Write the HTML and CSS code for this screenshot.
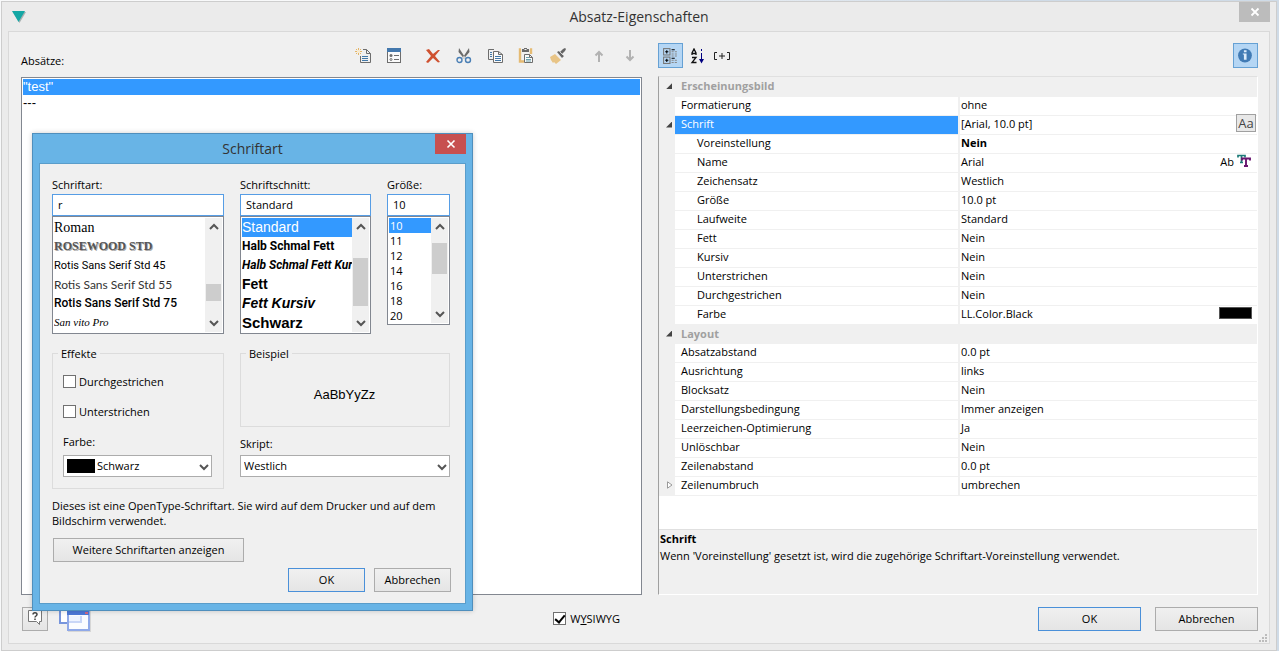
FILE: index.html
```html
<!DOCTYPE html>
<html lang="de">
<head>
<meta charset="utf-8">
<title>Absatz-Eigenschaften</title>
<link rel="stylesheet" href="styles.css">
</head>
<body>
<main class="window">
  <header class="titlebar">
    <svg class="app-icon" viewBox="0 0 16 16"><path d="M2 3h13L8.500 14z" fill="#7b8a8a" opacity=".6"/><path d="M1 2h13L7.500 13z" fill="#14a7a5"/></svg>
    <h1 class="title">Absatz-Eigenschaften</h1>
    <button class="close" type="button" aria-label="Schließen"><svg viewBox="0 0 10 10"><path d="M1.500 1.500l7 7M8.500 1.500l-7 7" stroke="#fff" stroke-width="1.800"/></svg></button>
  </header>

  <div class="panel">
    <section class="column">
      <div class="bar">
        <span class="bar-label" id="paragraphs">Absätze:</span>
        <div class="tools">
          <button type="button" class="tool" aria-label="Neu"><svg viewBox="0 0 16 16"><path d="M8 1.500h3.500l4 4v9h-10V8M11.500 1.500v4h4" fill="none" stroke="#6d6d6d"/><path d="M7 8.500h6M7 10.500h6M7 12.500h6" stroke="#4178a8"/><path d="M3.500 0v7M0 3.500h7M1 1l5 5M6 1L1 6" stroke="#e5b566"/><rect x="2" y="2" width="3" height="3" fill="#f7ead0"/></svg></button>
          <button type="button" class="tool" aria-label="Eigenschaften"><svg viewBox="0 0 16 16"><rect x="1.500" y="1.500" width="13" height="13" fill="#fafafa" stroke="#6d6d6d"/><path d="M1 0h14v4H1z" fill="#4478ad"/><circle cx="5" cy="7.500" r="1.500" fill="#6d6d6d"/><circle cx="5" cy="11.500" r="1" fill="none" stroke="#6d6d6d"/><path d="M8 7.500h5M8 11.500h5" stroke="#6d6d6d"/></svg></button>
          <span class="sep"></span>
          <button type="button" class="tool" aria-label="Löschen"><svg viewBox="0 0 16 16"><path d="M1 2l3-1 4 5 5-4h2L10 8l5 6-2 .5-5-4.500-5 5-2-1 5-6z" fill="#cf5130"/></svg></button>
          <button type="button" class="tool" aria-label="Ausschneiden"><svg viewBox="0 0 16 16"><path d="M3 0l6.500 10-1.500.5L2.500 4zM13 0L6.500 10l1.500.5L13.500 4z" fill="#6b6b6b"/><circle cx="3.500" cy="12" r="2.500" fill="none" stroke="#4a7fb5" stroke-width="1.400"/><circle cx="12" cy="12" r="2.500" fill="none" stroke="#4a7fb5" stroke-width="1.400"/></svg></button>
          <button type="button" class="tool" aria-label="Kopieren"><svg viewBox="0 0 16 16"><path d="M6 11.500H1.500v-10H7" fill="none" stroke="#6d6d6d"/><path d="M3 4.500h2M3 6.500h2M3 8.500h2" stroke="#4178a8"/><path d="M6.500 3.500h5l4 3v8h-9zM11.500 3.500v3h4" fill="#fafafa" stroke="#6d6d6d"/><path d="M8 8.500h6M8 10.500h6M8 12.500h6" stroke="#4178a8"/></svg></button>
          <button type="button" class="tool" aria-label="Einfügen"><svg viewBox="0 0 16 16"><path d="M3 1.500H2v12h4M12 1.500h1V6" fill="none" stroke="#e5bb73" stroke-width="2.400"/><path d="M4 1h2V0h3v1h2v3H4z" fill="#6b6b6b"/><rect x="6.500" y="1" width="2" height="1" fill="#f0f0f0"/><path d="M6.500 6.500h5l3 3v5h-8zM11.500 6.500v3h3" fill="#fafafa" stroke="#6d6d6d"/><path d="M8 9.500h3M8 11.500h5M8 13h5" stroke="#68a0ac"/></svg></button>
          <button type="button" class="tool wide" aria-label="Format übertragen"><svg viewBox="0 0 18 16"><path d="M1 9l5-3 6 6-5 4-2-2-1 1-2-3z" fill="#e8c486"/><path d="M8 4l2-1 5 5-2 2z" fill="#666"/><path d="M11 4l3-3 2-1 1 1-1 2-3 3z" fill="#666"/><path d="M10.500 3.500l4 4" stroke="#f0f0f0" stroke-width=".7"/></svg></button>
          <span class="sep"></span>
          <button type="button" class="tool" aria-label="Nach oben" disabled><svg viewBox="0 0 16 16"><path d="M9 14V4M5.500 7.500L9 4l3.500 3.500" fill="none" stroke="#b2b2b2" stroke-width="2"/></svg></button>
          <button type="button" class="tool" aria-label="Nach unten" disabled><svg viewBox="0 0 16 16"><path d="M9 2v10M5.500 8.500L9 12l3.500-3.500" fill="none" stroke="#b2b2b2" stroke-width="2"/></svg></button>
        </div>
      </div>
      <ul class="paragraphs" role="listbox" aria-labelledby="paragraphs">
        <li class="paragraph selected" role="option" aria-selected="true">"test"</li>
        <li class="paragraph" role="option">---</li>
      </ul>
      <div class="footer">
        <button type="button" class="button help" aria-label="Hilfe"><svg viewBox="0 0 16 18"><path d="M1.500 1.500h13v11h-2v3l-3-3h-8z" fill="#fff" stroke="#777"/><path d="M6 5.500c0-2.500 4-2.500 4 0 0 1.500-2 1.500-2 3M8 9.500V11" fill="none" stroke="#444" stroke-width="1.500"/></svg></button>
        <svg class="windows-icon" viewBox="0 0 34 26"><rect x="2" y="1" width="22" height="15" fill="#fff" stroke="#7795dc" stroke-width="2"/><rect x="10" y="4" width="23" height="21" fill="#bbb" opacity=".5"/><rect x="10" y="4" width="21" height="19" fill="#fbfcff" stroke="#90a9e8" stroke-width="2"/><rect x="9" y="4" width="22" height="4" fill="#4d78d8"/><rect x="27" y="5" width="3" height="2" fill="#d26a86"/><path d="M11 9h13v7H11z" fill="#c9d6f7"/><path d="M11 9h11v5H11z" fill="#eef3ff"/></svg>
        <label class="check wysiwyg"><input type="checkbox" class="box" checked><span>W<u>Y</u>SIWYG</span></label>
      </div>
    </section>

    <section class="column">
      <div class="bar right-bar">
        <button type="button" class="toggle" aria-label="Kategorisiert"><svg viewBox="0 0 16 16"><g fill="none" stroke="#777"><rect x="1.500" y="1.500" width="6" height="6"/><rect x="1.500" y="9.500" width="6" height="6"/></g><path d="M3 4.500h3M4.500 3v3M3 12.500h3M4.500 11v3M9 2.500h3M9 10.500h3" stroke="#000"/><path d="M9 4.500h6M9 6.500h6M9 8.500h6M9 12.500h6M9 14.500h6" stroke="#888" stroke-dasharray="2 1"/></svg></button>
        <button type="button" class="tool" aria-label="Alphabetisch"><svg viewBox="0 0 16 16"><path d="M2 7V5l2-4 2 4v2M2 5.500h4M2 9.500h4l-4 5h4.500" fill="none" stroke="#111" stroke-width="1.300"/><path d="M11.500 1v3" stroke="#000080" stroke-dasharray="2 1"/><path d="M11.500 5v7" stroke="#000080"/><path d="M9 11h5l-2.500 4.500z" fill="#000080"/></svg></button>
        <button type="button" class="tool expand" aria-label="Alle erweitern"><svg viewBox="0 0 18 16"><path d="M4 4.500H1.500v7H4M14 4.500h2.500v7H14M6 8h6M9 5v6" fill="none" stroke="#222"/></svg></button>
        <button type="button" class="toggle info" aria-label="Info"><svg viewBox="0 0 16 16"><circle cx="7.500" cy="8" r="6.500" fill="#417bb5"/><path d="M6.500 3h2.500v2H6.500zM5.500 6H9v6H6.500V7h-1z" fill="#dcecfb"/></svg></button>
      </div>
      <div class="grid">
        <table class="props">
          <colgroup><col class="c-gutter"><col class="c-name"><col></colgroup>
          <tbody>
            <tr class="category"><td class="gutter"><i class="open"></i></td><th colspan="2">Erscheinungsbild</th></tr>
            <tr><td class="gutter"></td><td class="name">Formatierung</td><td class="value">ohne</td></tr>
            <tr class="active"><td class="gutter"><i class="open"></i></td><td class="name">Schrift</td><td class="value"><div class="cell"><span>[Arial, 10.0 pt]</span><button type="button" class="font-button">Aa</button></div></td></tr>
            <tr class="child"><td class="gutter"></td><td class="name">Voreinstellung</td><td class="value strong">Nein</td></tr>
            <tr class="child"><td class="gutter"></td><td class="name">Name</td><td class="value"><div class="cell"><span>Arial</span><span class="ab">Ab</span><svg class="tt" viewBox="0 0 14 14"><path d="M1 3.500V1.500h7v2M4.500 2v7M3 8.500h3" fill="none" stroke="#1d7b78" stroke-width="1.700"/><path d="M5 6.500V4.500h8v2M9 5v7M7 12h4" fill="none" stroke="#6a1670" stroke-width="1.900"/></svg></div></td></tr>
            <tr class="child"><td class="gutter"></td><td class="name">Zeichensatz</td><td class="value">Westlich</td></tr>
            <tr class="child"><td class="gutter"></td><td class="name">Größe</td><td class="value">10.0 pt</td></tr>
            <tr class="child"><td class="gutter"></td><td class="name">Laufweite</td><td class="value">Standard</td></tr>
            <tr class="child"><td class="gutter"></td><td class="name">Fett</td><td class="value">Nein</td></tr>
            <tr class="child"><td class="gutter"></td><td class="name">Kursiv</td><td class="value">Nein</td></tr>
            <tr class="child"><td class="gutter"></td><td class="name">Unterstrichen</td><td class="value">Nein</td></tr>
            <tr class="child"><td class="gutter"></td><td class="name">Durchgestrichen</td><td class="value">Nein</td></tr>
            <tr class="child"><td class="gutter"></td><td class="name">Farbe</td><td class="value"><div class="cell"><span>LL.Color.Black</span><span class="color"></span></div></td></tr>
            <tr class="category"><td class="gutter"><i class="open"></i></td><th colspan="2">Layout</th></tr>
            <tr><td class="gutter"></td><td class="name">Absatzabstand</td><td class="value">0.0 pt</td></tr>
            <tr><td class="gutter"></td><td class="name">Ausrichtung</td><td class="value">links</td></tr>
            <tr><td class="gutter"></td><td class="name">Blocksatz</td><td class="value">Nein</td></tr>
            <tr><td class="gutter"></td><td class="name">Darstellungsbedingung</td><td class="value">Immer anzeigen</td></tr>
            <tr><td class="gutter"></td><td class="name">Leerzeichen-Optimierung</td><td class="value">Ja</td></tr>
            <tr><td class="gutter"></td><td class="name">Unlöschbar</td><td class="value">Nein</td></tr>
            <tr><td class="gutter"></td><td class="name">Zeilenabstand</td><td class="value">0.0 pt</td></tr>
            <tr><td class="gutter"><svg class="closed" viewBox="0 0 6 8"><path d="M.5.8L5 4 .5 7.200z" fill="#fff" stroke="#999"/></svg></td><td class="name">Zeilenumbruch</td><td class="value">umbrechen</td></tr>
          </tbody>
        </table>
        <div class="hint"><b>Schrift</b><p>Wenn 'Voreinstellung' gesetzt ist, wird die zugehörige Schriftart-Voreinstellung verwendet.</p></div>
      </div>
      <div class="footer actions">
        <button type="button" class="button default">OK</button>
        <button type="button" class="button">Abbrechen</button>
      </div>
    </section>
    <svg class="grip" viewBox="0 0 9 9"><path d="M6 0h2v2H6zM3 3h2v2H3zM6 3h2v2H6zM0 6h2v2H0zM3 6h2v2H3zM6 6h2v2H6z" fill="#bcbcbc"/></svg>
  </div>
</main>

<div class="dialog" role="dialog" aria-labelledby="dialog-title">
  <header class="dialog-bar">
    <h2 class="title" id="dialog-title">Schriftart</h2>
    <button class="close red" type="button" aria-label="Schließen"><svg viewBox="0 0 10 10"><path d="M1.500 1.500l7 7M8.500 1.500l-7 7" stroke="#fff" stroke-width="1.600"/></svg></button>
  </header>
  <form class="dialog-body">
    <div class="choices">
      <div class="choice">
        <label for="font">Schriftart:</label>
        <input class="text" id="font" type="text" value="r">
        <div class="listbox">
          <ul class="options" role="listbox" aria-label="Schriftart">
            <li class="f-roman">Roman</li><li class="f-rosewood">ROSEWOOD STD</li><li class="f-light">Rotis Sans Serif Std 45</li><li class="f-book">Rotis Sans Serif Std 55</li><li class="f-bold">Rotis Sans Serif Std 75</li><li class="f-script">San vito Pro</li>
          </ul>
          <div class="scroll"><svg viewBox="0 0 10 8"><path d="M1 6l4-4 4 4" /></svg><span class="space-7"></span><span class="thumb thumb-1"></span><span class="space-1"></span><svg viewBox="0 0 10 8"><path d="M1 2l4 4 4-4"/></svg></div>
        </div>
      </div>
      <div class="choice">
        <label for="style">Schriftschnitt:</label>
        <input class="text" id="style" type="text" value="Standard">
        <div class="listbox">
          <ul class="options sans" role="listbox" aria-label="Schriftschnitt">
            <li class="chosen">Standard</li><li class="narrow">Halb Schmal Fett</li><li class="narrow italic">Halb Schmal Fett Kursiv</li><li class="bold">Fett</li><li class="bold italic">Fett Kursiv</li><li class="black">Schwarz</li>
          </ul>
          <div class="scroll"><svg viewBox="0 0 10 8"><path d="M1 6l4-4 4 4" /></svg><span class="space-3"></span><span class="thumb thumb-6"></span><span class="space-1"></span><svg viewBox="0 0 10 8"><path d="M1 2l4 4 4-4"/></svg></div>
        </div>
      </div>
      <div class="choice">
        <label for="size">Größe:</label>
        <input class="text" id="size" type="text" value="10">
        <div class="listbox sizes">
          <ul class="options" role="listbox" aria-label="Größe">
            <li class="chosen">10</li><li>11</li><li>12</li><li>14</li><li>16</li><li>18</li><li>20</li>
          </ul>
          <div class="scroll"><svg viewBox="0 0 10 8"><path d="M1 6l4-4 4 4" /></svg><span class="space-1"></span><span class="thumb thumb-2"></span><span class="space-4"></span><svg viewBox="0 0 10 8"><path d="M1 2l4 4 4-4"/></svg></div>
        </div>
      </div>
    </div>

    <div class="details">
      <fieldset class="group effects">
        <legend>Effekte</legend>
        <label class="check"><input type="checkbox" class="box"><span>Durchgestrichen</span></label>
        <label class="check"><input type="checkbox" class="box"><span>Unterstrichen</span></label>
        <label for="color">Farbe:</label>
        <div class="drop swatch"><select id="color"><option>Schwarz</option></select><svg class="arrow" viewBox="0 0 10 8"><path d="M1 2l4 4 4-4"/></svg></div>
      </fieldset>
      <div class="sample-side">
        <fieldset class="group sample"><legend>Beispiel</legend><span>AaBbYyZz</span></fieldset>
        <label for="script">Skript:</label>
        <div class="drop"><select id="script"><option>Westlich</option></select><svg class="arrow" viewBox="0 0 10 8"><path d="M1 2l4 4 4-4"/></svg></div>
      </div>
    </div>

    <p class="note">Dieses ist eine OpenType-Schriftart. Sie wird auf dem Drucker und auf dem Bildschirm verwendet.</p>
    <button type="button" class="button more">Weitere Schriftarten anzeigen</button>
    <div class="dialog-actions">
      <button type="button" class="button default">OK</button>
      <button type="button" class="button">Abbrechen</button>
    </div>
  </form>
</div>
</body>
</html>
```
FILE: styles.css
```css
* { box-sizing: border-box; }

html, body { height: 100%; }

body {
  margin: 0;
  padding: 1px 2px 0 1px;
  background: linear-gradient(to right, #f8f9fa 40%, #cfdbe7 80%);
  color: #000;
  font: 11px/15px "Open Sans", "Noto Sans", sans-serif;
  overflow: hidden;
}

button, input, select { font: inherit; color: inherit; margin: 0; border-radius: 0; }
svg { display: block; }
ul { list-style: none; margin: 0; padding: 0; }
p { margin: 0; }

.window {
  height: 100%;
  display: flex;
  flex-direction: column;
  padding: 0 6px 6px;
  border: 1px solid #cdcdcd;
  background: #ebebeb;
}

.titlebar, .dialog-bar { display: flex; flex: none; align-items: center; justify-content: center; position: relative; }
.titlebar { height: 29px; }
.title { margin: 0; font-size: 14px; line-height: 20px; font-weight: 400; color: #333; }
.app-icon { position: absolute; left: 3px; top: 7px; width: 16px; height: 16px; }

.close {
  position: absolute;
  top: 0;
  right: 0;
  width: 31px;
  height: 20px;
  padding: 0;
  border: 0;
  background: #bcbcbc;
  display: grid;
  place-items: center;
}
.close svg { width: 10px; height: 10px; }
.red { background: #c75050; }

.panel {
  flex: 1;
  min-height: 0;
  position: relative;
  display: grid;
  grid-template-columns: 621fr 600fr;
  gap: 16px;
  padding: 0 11px 0 12px;
  border: 1px solid #d9d9d9;
  background: #f0f0f0;
}

.column { display: flex; flex-direction: column; min-width: 0; min-height: 0; }

.bar { flex: none; height: 45px; display: flex; justify-content: space-between; padding: 16px 5px 0 0; }
.bar-label { padding-top: 5px; font-weight: 500; }
.tools { display: flex; gap: 15px; }
.tool { width: 16px; height: 16px; padding: 0; border: 0; background: none; }
.tool svg { width: 100%; height: 16px; }
.wide { width: 18px; }
.sep { width: 8px; margin-right: -15px; }

.right-bar { height: 44px; justify-content: flex-start; padding: 11px 0 0; gap: 7px; }
.right-bar .tool { margin-top: 5px; }
.right-bar .expand { width: 18px; }
.toggle { width: 25px; height: 25px; padding: 3px; border: 1px solid #66a1d4; background: #b5d6f4; }
.toggle svg { width: 17px; height: 17px; }
.info { margin-left: auto; }

.paragraphs { flex: 1; padding: 1px; border: 1px solid #828790; background: #fff; font: 13px/16px "Liberation Sans", Arial, sans-serif; }
.paragraph { height: 16px; }
.selected { color: #fff; background: #3399ff; }

.footer { flex: none; height: 48px; padding-top: 12px; display: flex; align-items: flex-start; }
.actions { justify-content: flex-end; gap: 14px; }
.actions .button { width: 103px; }

.button { height: 24px; padding: 0 4px 2px; border: 1px solid #acacac; background: linear-gradient(#f0f0f0, #e5e5e5); text-align: center; }
.default { border-color: #4a90d9; }
.help { width: 26px; margin-left: 1px; }
.help svg { width: 16px; height: 18px; }
.windows-icon { width: 34px; height: 26px; margin-left: 10px; }

.check { display: flex; align-items: center; gap: 4px; }
.wysiwyg { margin: 4px 22px 0 auto; }
.box { appearance: none; width: 13px; height: 13px; border: 1px solid #707070; background: #fff; display: grid; place-items: center; }
.box:checked::before { content: ""; width: 4px; height: 8px; margin-top: -2px; border: solid #000; border-width: 0 2px 2px 0; transform: rotate(40deg); }

.grid {
  flex: 1;
  min-height: 0;
  display: flex;
  flex-direction: column;
  justify-content: space-between;
  border: 1px solid #fff;
  border-left-color: #a0a0a0;
  border-top-color: #e0e0e0;
  background: #fff;
}

.props { width: 100%; table-layout: fixed; border-collapse: collapse; }
.c-gutter { width: 16px; }
.c-name { width: 284px; }
.props tr { height: 19px; }
.props td, .props th { height: 19px; padding: 0 0 3px; border-bottom: 1px solid #f0f0f0; line-height: 15px; text-align: left; white-space: nowrap; }
.props .gutter { background: #f0f0f0; vertical-align: middle; }
.props .name { padding-left: 6px; border-right: 2px solid #f0f0f0; }
.props .child .name { padding-left: 22px; }
.props .value { padding-left: 1px; }
.props .strong { font-weight: 700; }
.category th { background: #f0f0f0; color: #a0a0a0; font-weight: 700; }
.props .category th { padding: 1px 0 2px 6px; }
.active .name { color: #fff; background: #3399ff; }

.open { display: block; width: 6px; height: 6px; margin: 3px 0 0 7px; background: #444; clip-path: polygon(100% 0, 100% 100%, 0 100%); }
.closed { width: 6px; height: 8px; margin: 2px 0 0 8px; }

.cell { display: flex; align-items: center; height: 15px; padding-right: 1px; }
.cell > :nth-child(2) { margin-left: auto; }
.font-button { width: 20px; height: 18px; padding: 0; border: 1px solid #a0a0a0; background: #e8e8e8; color: #444; font-size: 13px; line-height: 15px; }
.tt { width: 14px; height: 14px; margin: 0 5px 0 3px; }
.color { width: 33px; height: 12px; margin-right: 4px; border: 1px solid #555; background: #000; }

.hint { height: 65px; padding: 1px; border-top: 1px solid #e0e0e0; background: #f0f0f0; }
.hint b { display: block; line-height: 16px; }
.hint p { line-height: 17px; }

.grip { position: absolute; right: 1px; bottom: 0; width: 9px; height: 9px; }

.dialog {
  position: absolute;
  left: 32px;
  top: 133px;
  width: 441px;
  padding: 0 6px 6px;
  border: 1px solid #4f8fbd;
  background: #68b4e6;
  box-shadow: 0 0 5px rgba(0, 0, 0, .2);
}
.dialog-bar { height: 29px; }
.dialog-body {
  display: flex;
  flex-direction: column;
  padding: 13px 14px 11px 12px;
  border: 1px solid #5a9dca;
  background: #f0f0f0;
}

.choices { display: grid; grid-template-columns: 172px 131px 63px; gap: 16px; align-items: start; }
.choice { display: flex; flex-direction: column; }
.choice label { height: 17px; }
.text { width: 100%; height: 22px; padding: 0 5px 1px; border: 1px solid #569de5; background: #fff; }

.listbox { display: flex; height: 118px; padding: 1px; border: 1px solid #828790; background: #fff; }
.sizes { height: 109px; }
.options { flex: 1; overflow: hidden; white-space: nowrap; line-height: 19px; }
.options li { height: 19px; }
.sizes .options li { height: 15px; line-height: 15px; padding-left: 1px; }
.options .chosen { color: #fff; background: #3399ff; }
.sans { font: 14px/19px "Liberation Sans", Arial, sans-serif; }
.narrow { font-family: Roboto, sans-serif; font-size: 12px; font-weight: 700; }
.italic { font-style: italic; }
.bold { font-weight: 700; }
.black { font-weight: 700; font-size: 15px; }

.f-roman { font-family: "Liberation Serif", serif; font-size: 14px; }
.f-rosewood { font-family: "Liberation Serif", serif; font-size: 12px; font-weight: 700; color: #555; text-shadow: 1px 1px #aaa; }
.f-light { font-family: Roboto, sans-serif; font-size: 11px; }
.f-book { font-family: Lato, sans-serif; font-size: 12px; color: #333; }
.f-bold { font-family: Roboto, sans-serif; font-size: 12px; font-weight: 500; }
.f-script { font-family: "Liberation Serif", serif; font-size: 11px; font-style: italic; }

.scroll { width: 17px; display: flex; flex-direction: column; align-items: center; padding: 5px 1px; background: #f0f0f0; }
.scroll svg { flex: none; width: 10px; height: 8px; }
.scroll path, .arrow path { fill: none; stroke: #555; stroke-width: 2; }
.thumb { width: 15px; background: #cdcdcd; }
.thumb-1 { height: 17px; flex: none; }
.thumb-2 { height: 31px; flex: none; }
.thumb-6 { height: 48px; flex: none; }
.space-1 { flex: 1; }
.space-3 { flex: 2; }
.space-4 { flex: 3; }
.space-7 { flex: 3; }

.details { display: grid; grid-template-columns: 172px 210px; gap: 16px; margin-top: 12px; }
.group { min-width: 0; margin: 0; padding: 0 11px 0 10px; border: 1px solid #dcdcdc; }
.group legend { padding: 0 3px; margin-left: -5px; line-height: 15px; }
.effects { display: flex; flex-direction: column; height: 143px; }
.effects .check { height: 15px; margin: 13px 0 2px; gap: 3px; }
.effects > label[for] { margin: 13px 0 6px; }
.sample { height: 81px; text-align: center; font: 13px/16px "Liberation Sans", Arial, sans-serif; }
.sample legend { font: 11px/15px "Open Sans", sans-serif; text-align: left; }
.sample span { display: block; padding-top: 26px; }
.sample-side > label { display: block; margin: 9px 0 4px; }

.drop { position: relative; }
.drop select { display: block; appearance: none; width: 100%; height: 22px; padding: 0 20px 1px 3px; border: 1px solid #acacac; background: #fff; }
.swatch select { padding-left: 33px; background: linear-gradient(#000, #000) 3px 3px / 28px 14px no-repeat #fff; }
.arrow { position: absolute; right: 3px; top: 8px; width: 10px; height: 8px; pointer-events: none; }

.note { margin-top: 9px; }
.more { width: 191px; margin: 10px 0 0 1px; }
.dialog-actions { display: flex; justify-content: flex-end; gap: 9px; margin-top: 6px; }
.dialog-actions .button { width: 77px; }
```
